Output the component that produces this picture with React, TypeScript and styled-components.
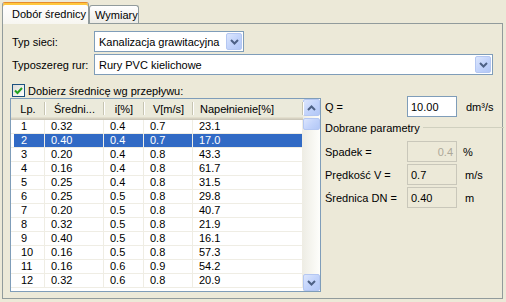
import React from "react";
import styled, { createGlobalStyle } from "styled-components";

const GlobalStyle = createGlobalStyle`
  html, body { margin: 0; padding: 0; }
  body {
    background: #ECE9D8;
    font-family: "Liberation Sans", Arial, sans-serif;
    font-size: 11px;
    color: #000;
  }
  * { box-sizing: border-box; }
`;

const Window = styled.div`
  width: 506px;
  height: 302px;
  padding: 2px 3px 0 2px;
  background: #ECE9D8;
  overflow: hidden;
`;

const TabStrip = styled.div`
  display: flex;
  align-items: flex-end;
  height: 22px;
  position: relative;
  z-index: 1;
  margin-bottom: -1px;
`;

const Tab = styled.div<{ $active?: boolean; $w: number }>`
  width: ${(p) => p.$w}px;
  height: ${(p) => (p.$active ? 22 : 18)}px;
  margin-bottom: ${(p) => (p.$active ? 0 : 1)}px;
  padding-left: ${(p) => (p.$active ? 9 : 5)}px;
  display: flex;
  align-items: center;
  padding-top: ${(p) => (p.$active ? 1 : 0)}px;
  border: 1px solid #919B9C;
  border-bottom: none;
  border-radius: 3px 3px 0 0;
  white-space: nowrap;
  ${(p) =>
    p.$active
      ? `
    border-top: 1px solid #E68B2C;
    box-shadow: inset 0 2px 0 #FFC73C;
    background: linear-gradient(#FFFFFF, #F7F6F1);
  `
      : `
    background: linear-gradient(#FFFFFF, #ECEBE6);
  `}
`;

const Panel = styled.div`
  height: 276px;
  border: 1px solid #919B9C;
  background: #ECE9D8;
  padding: 7px 9px 0 7px;
  display: flex;
  flex-direction: column;
`;

const FieldRow = styled.div`
  display: grid;
  grid-template-columns: 82px 1fr;
  align-items: center;
  height: 21px;
  margin-bottom: 2px;
  padding-left: 2px;
`;

const Label = styled.span`
  white-space: nowrap;
`;

const Combo = styled.div<{ $w?: number }>`
  position: relative;
  width: ${(p) => (p.$w ? `${p.$w}px` : "auto")};
  height: 21px;
  border: 1px solid #7F9DB9;
  background: #fff;
  padding-left: 4px;
  display: flex;
  align-items: center;
`;

const XpButton = styled.div`
  background: linear-gradient(135deg, #DCE6FD 0%, #C3D4FB 50%, #B2C7F6 100%);
  border: 1px solid #B4C7F2;
  border-radius: 2px;
  display: flex;
  align-items: center;
  justify-content: center;
`;

const ComboButton = styled(XpButton)`
  position: absolute;
  right: 1px;
  top: 1px;
  bottom: 1px;
  width: 16px;
`;

const Chevron = ({ up }: { up?: boolean }) => (
  <svg width="9" height="6" viewBox="0 0 9 6">
    <path
      d={up ? "M1 5 L4.5 1.5 L8 5" : "M1 1 L4.5 4.5 L8 1"}
      fill="none"
      stroke="#4D6185"
      strokeWidth="2"
    />
  </svg>
);

const CheckRow = styled.label`
  display: flex;
  align-items: center;
  gap: 3px;
  height: 13px;
  margin-top: 7px;
  padding-left: 2px;
  white-space: nowrap;
`;

const CheckBox = styled.span`
  width: 13px;
  height: 13px;
  border: 1px solid #1C5180;
  background: linear-gradient(135deg, #DCDBD5, #FFFFFF);
  display: flex;
  align-items: center;
  justify-content: center;
`;

const MainRow = styled.div`
  display: flex;
  align-items: flex-start;
  margin-top: 1px;
`;

const ListView = styled.div`
  width: 314px;
  height: 194px;
  margin-left: 0;
  border: 1px solid #7F9DB9;
  background: #fff;
  display: flex;
`;

const TableArea = styled.div`
  flex: 1;
  display: flex;
  flex-direction: column;
`;

const COLS = "34px 59px 40px 49px 110px 1fr";

const HeaderRow = styled.div`
  display: grid;
  grid-template-columns: ${COLS};
  height: 21px;
  background: #EBEADB;
  box-shadow: inset 0 -1px 0 #CBC7B8, inset 0 -2px 0 #D6D2C2, inset 0 -3px 0 #E2DECD;
`;

const HeaderCell = styled.div<{ $pr?: number }>`
  position: relative;
  display: flex;
  align-items: center;
  justify-content: center;
  padding-bottom: 2px;
  padding-right: ${(p) => p.$pr ?? 0}px;
  white-space: nowrap;
  &::after {
    content: "";
    position: absolute;
    right: 0;
    top: 3px;
    bottom: 5px;
    width: 1px;
    background: #C7C5B2;
    box-shadow: 1px 0 0 #fff;
  }
`;

const HeaderFill = styled.div``;

const DataRow = styled.div<{ $sel?: boolean }>`
  display: grid;
  grid-template-columns: ${COLS};
  height: 14px;
  color: ${(p) => (p.$sel ? "#fff" : "#000")};
`;

const Cell = styled.div<{ $sel?: boolean; $first?: boolean }>`
  border-right: 1px solid #EFEDE4;
  border-bottom: 1px solid #EFEDE4;
  padding-left: ${(p) => (p.$first ? 10 : 6)}px;
  line-height: 13px;
  white-space: nowrap;
  background: ${(p) =>
    p.$sel
      ? p.$first
        ? "linear-gradient(to right, transparent 3px, #316AC5 3px)"
        : "#316AC5"
      : "transparent"};
`;

const FillCell = styled.div``;

const ScrollBar = styled.div`
  width: 17px;
  display: flex;
  flex-direction: column;
  background: linear-gradient(to right, #EEEDE5, #FEFEFB);
`;

const ScrollBtn = styled(XpButton)`
  width: 17px;
  height: 17px;
`;

const Thumb = styled(XpButton)`
  width: 17px;
  height: 12px;
  margin-top: 2px;
`;

const Track = styled.div`
  flex: 1;
`;

const SidePane = styled.div`
  flex: 1;
  margin-left: 4px;
  margin-top: -2px;
  display: flex;
  flex-direction: column;
`;

const ParamRow = styled.div<{ $mt?: number }>`
  display: grid;
  grid-template-columns: 82px 50px auto;
  align-items: center;
  height: 21px;
  margin-top: ${(p) => p.$mt ?? 0}px;
`;

const Field = styled.div<{ $kind: "edit" | "disabled" | "readonly" }>`
  height: 21px;
  display: flex;
  align-items: center;
  padding: 0 3px;
  border: 1px solid ${(p) => (p.$kind === "edit" ? "#7F9DB9" : "#C9C7BA")};
  background: ${(p) => (p.$kind === "edit" ? "#fff" : "#ECE9D8")};
  color: ${(p) => (p.$kind === "disabled" ? "#ACA899" : "#000")};
  justify-content: ${(p) => (p.$kind === "disabled" ? "flex-end" : "flex-start")};
`;

const Unit = styled.span<{ $ml?: number }>`
  margin-left: ${(p) => p.$ml ?? 8}px;
  white-space: nowrap;
`;

const GroupHeader = styled.div`
  display: flex;
  align-items: center;
  margin-top: 4px;
  height: 13px;
  margin-right: -10px;
`;

const GroupLine = styled.div`
  flex: 1;
  height: 1px;
  background: #D0D0BF;
  margin-left: 3px;
`;

const rows: [string, string, string, string, string][] = [
  ["1", "0.32", "0.4", "0.7", "23.1"],
  ["2", "0.40", "0.4", "0.7", "17.0"],
  ["3", "0.20", "0.4", "0.8", "43.3"],
  ["4", "0.16", "0.4", "0.8", "61.7"],
  ["5", "0.25", "0.4", "0.8", "31.5"],
  ["6", "0.25", "0.5", "0.8", "29.8"],
  ["7", "0.20", "0.5", "0.8", "40.7"],
  ["8", "0.32", "0.5", "0.8", "21.9"],
  ["9", "0.40", "0.5", "0.8", "16.1"],
  ["10", "0.16", "0.5", "0.8", "57.3"],
  ["11", "0.16", "0.6", "0.9", "54.2"],
  ["12", "0.32", "0.6", "0.8", "20.9"],
];

export default function App() {
  return (
    <>
      <GlobalStyle />
      <Window>
        <TabStrip>
          <Tab $active $w={87}>Dobór średnicy</Tab>
          <Tab $w={50}>Wymiary</Tab>
        </TabStrip>
        <Panel>
          <FieldRow>
            <Label>Typ sieci:</Label>
            <Combo $w={150}>
              Kanalizacja grawitacyjna
              <ComboButton>
                <Chevron />
              </ComboButton>
            </Combo>
          </FieldRow>
          <FieldRow>
            <Label>Typoszereg rur:</Label>
            <Combo>
              Rury PVC kielichowe
              <ComboButton>
                <Chevron />
              </ComboButton>
            </Combo>
          </FieldRow>
          <CheckRow>
            <CheckBox>
              <svg width="9" height="9" viewBox="0 0 9 9">
                <path d="M1 4.5 L3.5 7 L8 2" fill="none" stroke="#21A121" strokeWidth="2" />
              </svg>
            </CheckBox>
            Dobierz średnicę wg przepływu:
          </CheckRow>
          <MainRow>
            <ListView>
              <TableArea>
                <HeaderRow>
                  <HeaderCell>Lp.</HeaderCell>
                  <HeaderCell>Średni...</HeaderCell>
                  <HeaderCell>i[%]</HeaderCell>
                  <HeaderCell>V[m/s]</HeaderCell>
                  <HeaderCell $pr={22}>Napełnienie[%]</HeaderCell>
                  <HeaderFill />
                </HeaderRow>
                {rows.map((r, i) => {
                  const sel = i === 1;
                  return (
                    <DataRow key={r[0]} $sel={sel}>
                      {r.map((v, j) => (
                        <Cell key={j} $sel={sel} $first={j === 0}>
                          {v}
                        </Cell>
                      ))}
                      <FillCell />
                    </DataRow>
                  );
                })}
              </TableArea>
              <ScrollBar>
                <ScrollBtn>
                  <Chevron up />
                </ScrollBtn>
                <Thumb />
                <Track />
                <ScrollBtn>
                  <Chevron />
                </ScrollBtn>
              </ScrollBar>
            </ListView>
            <SidePane>
              <ParamRow>
                <span>Q =</span>
                <Field $kind="edit">10.00</Field>
                <Unit $ml={9}>dm³/s</Unit>
              </ParamRow>
              <GroupHeader>
                <span>Dobrane parametry</span>
                <GroupLine />
              </GroupHeader>
              <ParamRow $mt={7}>
                <span>Spadek =</span>
                <Field $kind="disabled">0.4</Field>
                <Unit $ml={6}>%</Unit>
              </ParamRow>
              <ParamRow $mt={2}>
                <span>Prędkość V =</span>
                <Field $kind="readonly">0.7</Field>
                <Unit $ml={8}>m/s</Unit>
              </ParamRow>
              <ParamRow $mt={2}>
                <span>Średnica DN =</span>
                <Field $kind="readonly">0.40</Field>
                <Unit $ml={8}>m</Unit>
              </ParamRow>
            </SidePane>
          </MainRow>
        </Panel>
      </Window>
    </>
  );
}
